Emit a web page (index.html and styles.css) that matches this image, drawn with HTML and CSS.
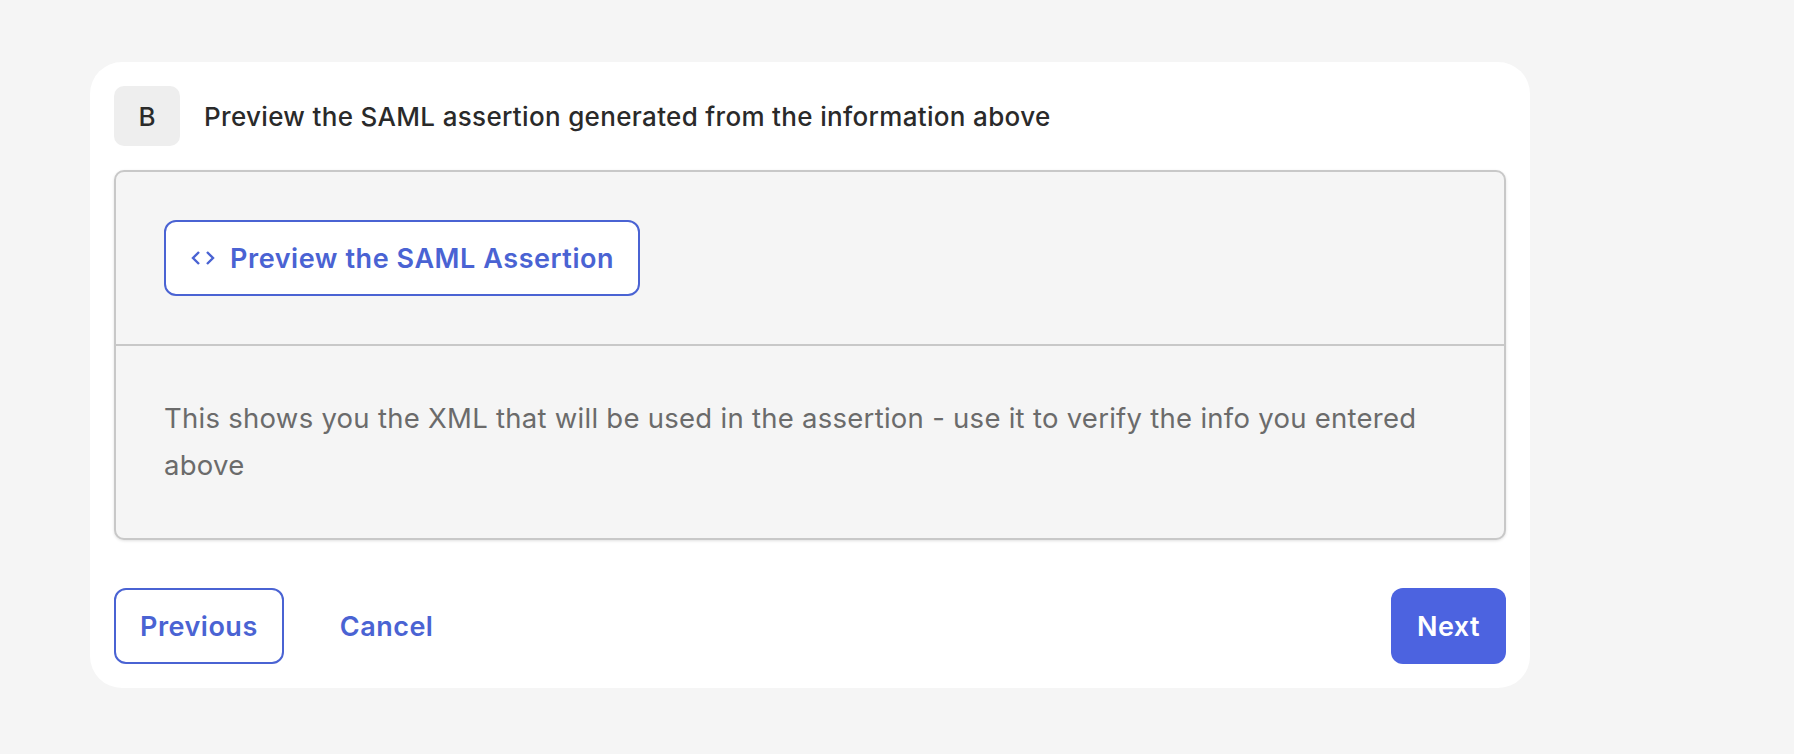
FILE: index.html
```html
<!DOCTYPE html>
<html lang="en">
<head>
  <meta charset="UTF-8">
  <meta name="viewport" content="width=device-width, initial-scale=1.0">
  <title>Preview SAML assertion</title>
  <link rel="stylesheet" href="styles.css">
</head>
<body>
  <section class="card">
    <div class="step">
      <span class="step-badge">B</span>
      <h2 class="step-title">Preview the SAML assertion generated from the information above</h2>
    </div>

    <div class="panel">
      <div class="panel-top">
        <button class="btn btn-outline btn-preview">
          <svg class="code-icon" width="24" height="16" viewBox="0 0 24 16" fill="none" stroke="currentColor" stroke-width="2.4">
            <path d="M8 2 2 8l6 6"/>
            <path d="M16 2l6 6-6 6"/>
          </svg>
          Preview the SAML Assertion
        </button>
      </div>
      <p class="panel-text">This shows you the XML that will be used in the assertion - use it to verify the info you entered above</p>
    </div>

    <div class="actions">
      <button class="btn btn-outline">Previous</button>
      <button class="btn btn-link">Cancel</button>
      <button class="btn btn-primary">Next</button>
    </div>
  </section>
</body>
</html>
```

FILE: styles.css
```css
* {
  box-sizing: border-box;
}

body {
  margin: 0;
  padding: 62px 0 0 90px;
  background-color: #f5f5f5;
  font-family: Inter, "Liberation Sans", sans-serif;
}

.card {
  width: 1440px;
  height: 626px;
  padding: 24px;
  background-color: white;
  border-radius: 32px;
}

.step {
  display: flex;
  align-items: center;
  gap: 24px;
  height: 60px;
  margin-bottom: 24px;
}

.step-badge {
  display: flex;
  align-items: center;
  justify-content: center;
  width: 66px;
  height: 60px;
  background-color: #eeeeee;
  border-radius: 10px;
  font-size: 26px;
  font-weight: 500;
  color: #2a2a2a;
}

.step-title {
  margin: 0;
  font-size: 26px;
  font-weight: 500;
  letter-spacing: 0.33px;
  color: #2a2a2a;
}

.panel {
  height: 370px;
  background-color: #f5f5f5;
  border: 2px solid #c8c8c8;
  border-radius: 10px;
  box-shadow: 0 1px 3px rgba(0, 0, 0, 0.12);
}

.panel-top {
  height: 174px;
  padding: 48px;
  border-bottom: 2px solid #c8c8c8;
}

.panel-text {
  margin: 0;
  padding: 49px 48px;
  font-size: 27.5px;
  line-height: 47px;
  letter-spacing: 0.27px;
  color: #6b6b6b;
}

.btn {
  height: 76px;
  border-radius: 12px;
  font-family: inherit;
  font-size: 27px;
  font-weight: 600;
  letter-spacing: 0.5px;
  white-space: nowrap;
  cursor: pointer;
}

.btn-outline {
  padding: 0 24px;
  background-color: white;
  border: 2px solid #4a63d3;
  color: #4a63d3;
}

.btn-preview {
  display: flex;
  align-items: center;
  gap: 15px;
  padding: 0 24px 0 25px;
  letter-spacing: 0.56px;
}

.code-icon {
  flex: none;
}

.btn-link {
  padding: 0;
  margin-left: 56px;
  background: none;
  border: none;
  color: #4a63d3;
}

.btn-primary {
  width: 115px;
  margin-left: auto;
  background-color: #4c63e0;
  border: none;
  color: white;
}

.actions {
  display: flex;
  margin-top: 48px;
}
```
